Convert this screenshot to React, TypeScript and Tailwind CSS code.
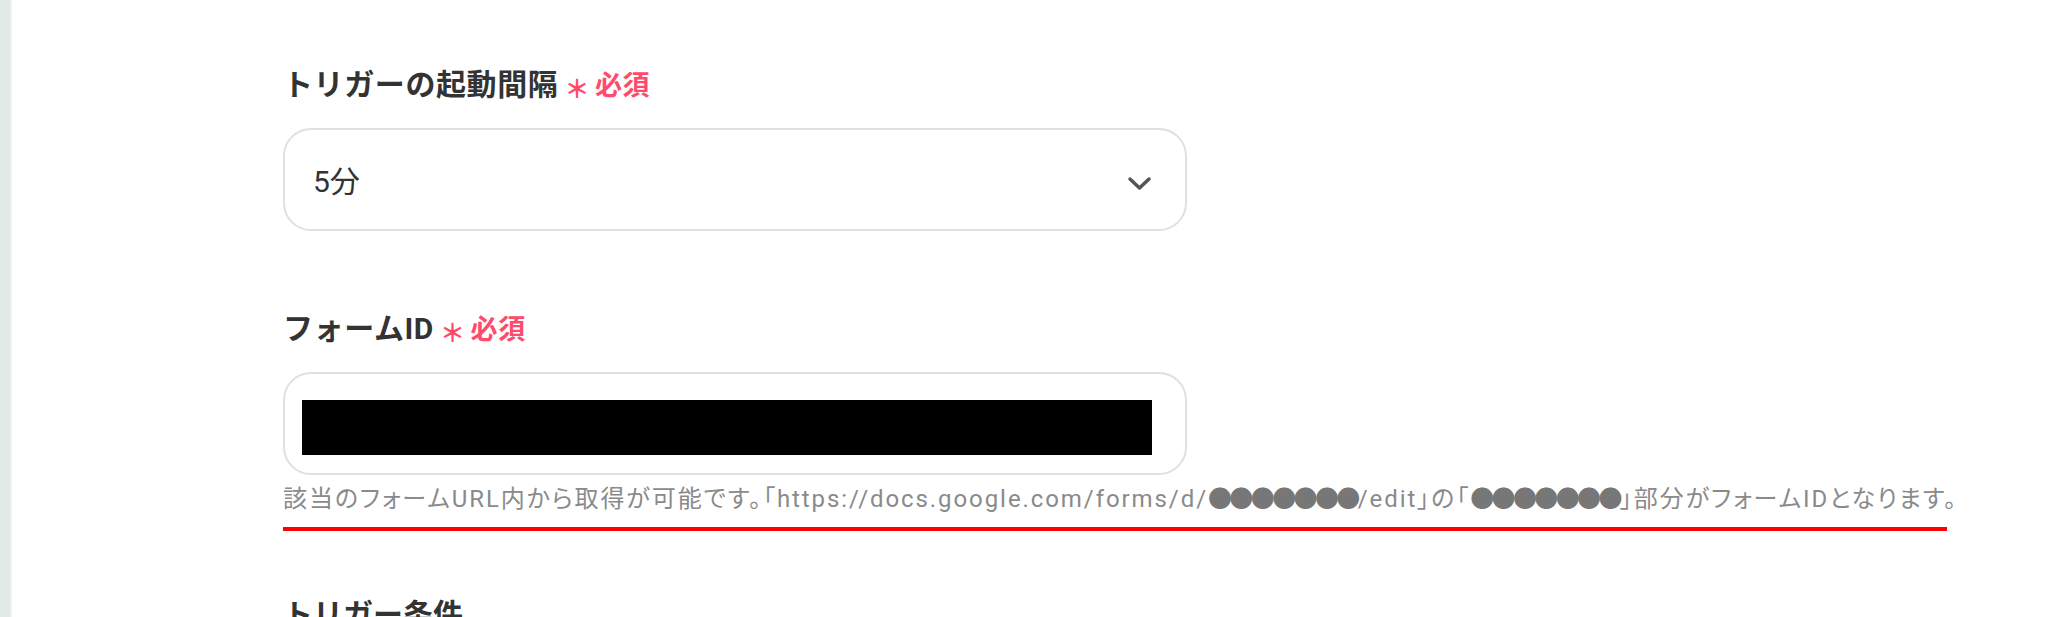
import React from "react";

const font = { fontFamily: 'Roboto, "Noto Sans CJK JP", sans-serif' };

function Required() {
  return (
    <span className="ml-[6px] inline-flex items-baseline text-[#ff4a6b] font-bold">
      <span className="text-[25px] leading-none translate-y-[3px] inline-block">＊</span>
      <span className="text-[27px] ml-[5px]">必須</span>
    </span>
  );
}

function Dots() {
  return (
    <span className="text-[24px] tracking-[-2.6px] text-[#777777]">●●●●●●●</span>
  );
}

export default function App() {
  return (
    <div
      className="h-[617px] w-[2048px] overflow-hidden bg-white flex"
      style={font}
    >
      <div className="w-[12px] shrink-0 bg-[#e2eae9] border-r-2 border-[#eef3f2]" />
      <div className="pl-[271px] pt-[62px] flex flex-col">
        <div className="shrink-0 flex items-baseline h-[45px] leading-[45px] text-[30px] font-bold text-[#333333] tracking-[0.02em]">
          <span>トリガーの起動間隔</span>
          <Required />
        </div>

        <div className="shrink-0 mt-[21px] h-[103px] w-[904px] rounded-[28px] border-2 border-[#e0e0e0] flex items-center justify-between pl-[28px] pr-[33px] pt-[4px]">
          <span className="text-[30px] text-[#333333]">5分</span>
          <svg width="25" height="15" viewBox="0 0 25 15" fill="none" className="mt-[4px]">
            <polyline
              points="3,3 12.5,12 22,3"
              stroke="#555555"
              strokeWidth="3.5"
              strokeLinecap="round"
              strokeLinejoin="round"
            />
          </svg>
        </div>

        <div className="shrink-0 mt-[75px] flex items-baseline h-[45px] leading-[45px] text-[30px] font-bold text-[#333333] tracking-[0.02em]">
          <span>フォームID</span>
          <Required />
        </div>

        <div className="shrink-0 mt-[21px] h-[103px] w-[904px] rounded-[28px] border-2 border-[#e0e0e0] pl-[17px] pr-[33px] pt-[26px]">
          <div className="h-[55px] w-[850px] bg-black" />
        </div>

        <div
          className="shrink-0 mt-[6px] leading-[36px] text-[24px] text-[#8a8a8a] whitespace-nowrap tracking-[0.08em]"
          style={{ fontFeatureSettings: '"palt"' }}
        >
          該当のフォームURL内から取得が可能です。「https://docs.google.com/forms/d/
          <Dots />
          /edit」の「
          <Dots />
          」部分がフォームIDとなります。
        </div>
        <div className="shrink-0 mt-[10px] h-[4px] w-[1664px] bg-[#ff0000]" />

        <div className="shrink-0 mt-[61px] h-[45px] leading-[45px] text-[30px] font-bold text-[#333333]">
          トリガー条件
        </div>
      </div>
    </div>
  );
}
